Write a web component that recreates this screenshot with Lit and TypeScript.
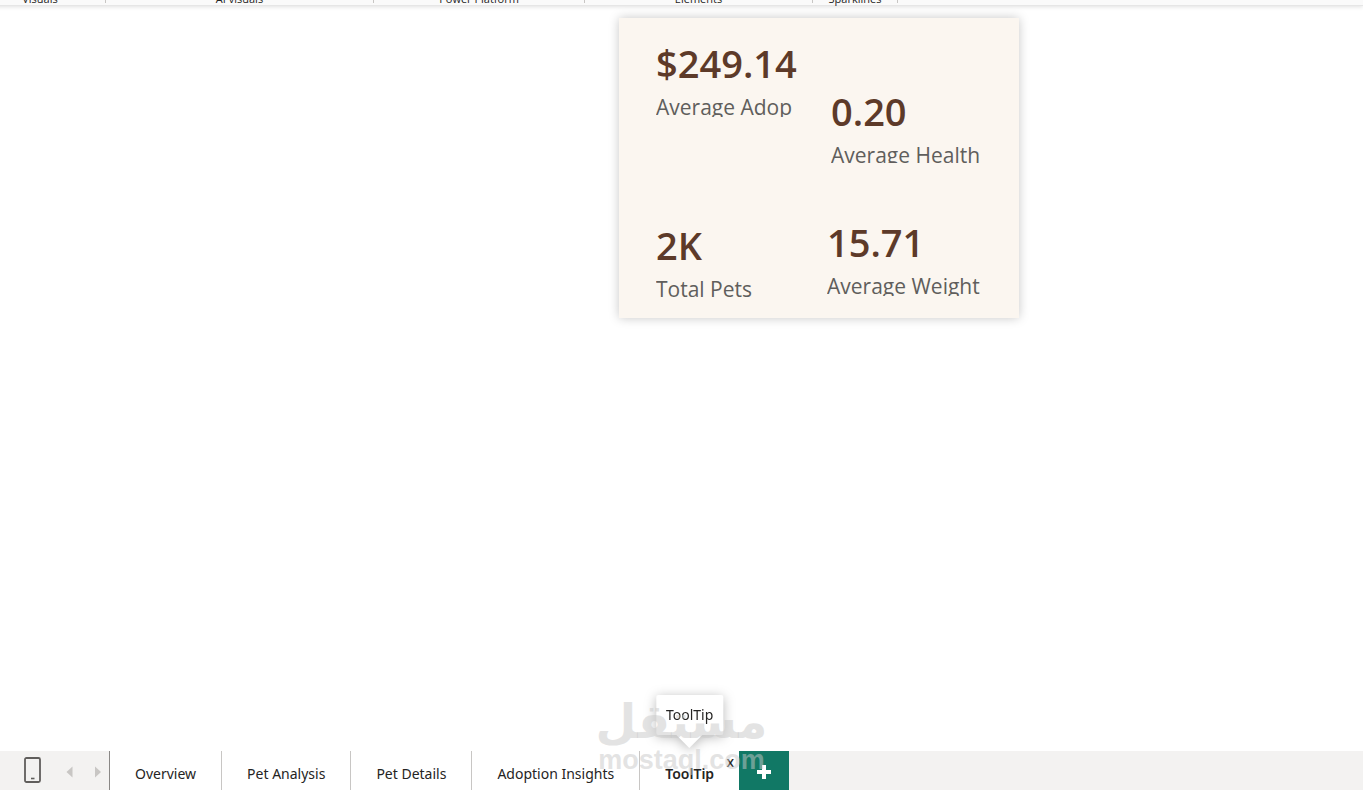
import { LitElement, html, css } from "lit";
import { customElement, state } from "lit/decorators.js";

interface Kpi {
  value: string;
  label: string;
  cls: string;
}

const GROUPS = ["Visuals", "AI visuals", "Power Platform", "Elements", "Sparklines", ""];

const PAGES = ["Overview", "Pet Analysis", "Pet Details", "Adoption Insights", "ToolTip"];

const TOP_ROW: Kpi[] = [
  { value: "$249.14", label: "Average Adop", cls: "kpi" },
  { value: "0.20", label: "Average Health", cls: "kpi lowered" },
];

const BOTTOM_ROW: Kpi[] = [
  { value: "2K", label: "Total Pets", cls: "kpi shifted" },
  { value: "15.71", label: "Average Weight", cls: "kpi" },
];

@customElement("app-root")
export class AppRoot extends LitElement {
  static styles = css`
    :host {
      display: flex;
      flex-direction: column;
      position: relative;
      height: 100vh;
      overflow: hidden;
      background: #fff;
      font-family: "Segoe UI", "Open Sans", "Noto Sans", sans-serif;
      color: #252423;
    }
    * {
      box-sizing: border-box;
    }
    button {
      border: 0;
      background: none;
      padding: 0;
      margin: 0;
      font: inherit;
      color: inherit;
      cursor: pointer;
    }

    /* bottom edge of the ribbon */
    .ribbon {
      flex: none;
      display: grid;
      grid-template-columns: 131px 268px 211px 228px 85px 1fr;
      grid-template-rows: 5px;
      align-items: end;
      height: 6px;
      margin-left: -25px;
      background: #fafafa;
      border-bottom: 1px solid #e6e6e6;
      box-shadow: 0 1px 4px rgba(0, 0, 0, 0.12);
    }
    .group {
      display: flex;
      align-items: end;
      justify-content: center;
      height: 12px;
      margin-bottom: 2px;
      border-right: 1px solid #c8c6c4;
      font-size: 11px;
      line-height: 8px;
    }
    .group:last-child {
      border-right: 0;
    }

    /* report canvas */
    .canvas {
      flex: 1;
      min-height: 0;
      padding: 12px 0 0 275px;
    }
    .card {
      width: 400px;
      margin: 0 auto;
      padding: 20px 37px 16px;
      background: #fbf6f0;
      box-shadow: 0 0 10px rgba(0, 0, 0, 0.22);
    }
    .row {
      display: grid;
      grid-template-columns: 138px 156px;
      align-items: start;
    }
    .row.top {
      column-gap: 37px;
      height: 179px;
    }
    .row.bottom {
      column-gap: 33px;
      height: 85px;
    }
    .lowered {
      padding-top: 48px;
    }
    .shifted {
      padding-top: 3px;
    }
    .value {
      margin: 0;
      font-size: 38px;
      line-height: 50px;
      font-weight: 600;
      color: #5d3a29;
    }
    .label {
      margin: 0;
      height: 29px;
      font-size: 21px;
      line-height: 38px;
      color: #605e5c;
      overflow: hidden;
      white-space: nowrap;
    }
    .lowered .label {
      height: 27px;
    }

    /* page tabs */
    .bar {
      flex: none;
      display: flex;
      height: 39px;
      background: #f3f2f1;
      font-family: "Segoe UI", "Noto Sans", "Open Sans", sans-serif;
      font-size: 14px;
    }
    .tools {
      display: flex;
      align-items: center;
      gap: 19px;
      width: 110px;
      padding: 0 0 2px 24px;
      border-right: 1px solid #8a8886;
    }
    .tools svg,
    .add svg {
      display: block;
    }
    .arrows {
      display: flex;
      gap: 14px;
      padding-top: 4px;
    }
    .tab {
      position: relative;
      display: flex;
      background: #fff;
      border-right: 1px solid #c8c6c4;
    }
    .tab.active {
      border-right: 0;
      font-weight: 600;
    }
    .name {
      padding: 6px 25px 0;
      white-space: nowrap;
    }
    .close {
      position: absolute;
      top: 3px;
      right: 5px;
      font-size: 14px;
      font-weight: 500;
      line-height: 16px;
    }
    .tip {
      position: absolute;
      left: 50%;
      bottom: 55px;
      transform: translateX(-50%);
      padding: 0 10px;
      line-height: 40px;
      font-weight: 400;
      white-space: nowrap;
      background: #fff;
      border-radius: 2px;
      filter: drop-shadow(0 2px 6px rgba(0, 0, 0, 0.28));
    }
    .tip::after {
      content: "";
      position: absolute;
      left: 50%;
      top: 100%;
      margin-left: -13px;
      border: 13px solid transparent;
      border-top-color: #fff;
      border-bottom: 0;
    }
    .add {
      width: 50px;
      padding-top: 2px;
      display: grid;
      place-items: center;
      background: #117865;
    }

    .watermark {
      position: absolute;
      left: 50%;
      bottom: 15px;
      transform: translateX(-50%);
      display: flex;
      flex-direction: column;
      align-items: center;
      color: rgba(200, 200, 200, 0.5);
      font-weight: 700;
      pointer-events: none;
    }
    .brand {
      font-family: "DejaVu Sans", sans-serif;
      font-size: 47px;
      line-height: 46px;
    }
    .domain {
      font-family: "Liberation Sans", sans-serif;
      font-size: 27px;
      line-height: 30px;
    }
  `;

  @state() private active = "ToolTip";

  private kpi(k: Kpi) {
    return html`<div class=${k.cls}>
      <p class="value">${k.value}</p>
      <p class="label">${k.label}</p>
    </div>`;
  }

  private tab(name: string) {
    const select = () => (this.active = name);
    if (name !== this.active) {
      return html`<div class="tab"><button class="name" @click=${select}>${name}</button></div>`;
    }
    return html`<div class="tab active">
      <button class="name" aria-current="page">${name}</button>
      <button class="close" aria-label="Delete page">x</button>
      <span class="tip" role="tooltip">${name}</span>
    </div>`;
  }

  render() {
    return html`
      <header class="ribbon">${GROUPS.map((g) => html`<span class="group">${g}</span>`)}</header>
      <main class="canvas">
        <section class="card">
          <div class="row top">${TOP_ROW.map((k) => this.kpi(k))}</div>
          <div class="row bottom">${BOTTOM_ROW.map((k) => this.kpi(k))}</div>
        </section>
      </main>
      <nav class="bar">
        <div class="tools">
          <button aria-label="Mobile layout">
            <svg width="17" height="26" viewBox="0 0 17 26" fill="none">
              <rect x="1" y="1" width="15" height="24" rx="1.5" stroke="#605e5c" stroke-width="1.8" />
              <path d="M7 21.5h3.5" stroke="#605e5c" stroke-width="1.6" />
            </svg>
          </button>
          <div class="arrows">
            <button aria-label="Previous pages">
              <svg width="14" height="12" viewBox="0 0 14 12"><path d="M12.500 .5v11L6.500 6z" fill="#c8c6c4" /></svg>
            </button>
            <button aria-label="Next pages">
              <svg width="14" height="12" viewBox="0 0 14 12"><path d="M7 .5v11L13 6z" fill="#c8c6c4" /></svg>
            </button>
          </div>
        </div>
        ${PAGES.map((p) => this.tab(p))}
        <button class="add" aria-label="New page">
          <svg width="16" height="14" viewBox="0 0 16 14">
            <path d="M6 0h4v5h5v4h-5v5H6V9H1V5h5z" fill="#fff" />
          </svg>
        </button>
      </nav>
      <div class="watermark">
        <span class="brand" lang="ar" dir="rtl">مستقل</span>
        <span class="domain">mostaql.com</span>
      </div>
    `;
  }
}
